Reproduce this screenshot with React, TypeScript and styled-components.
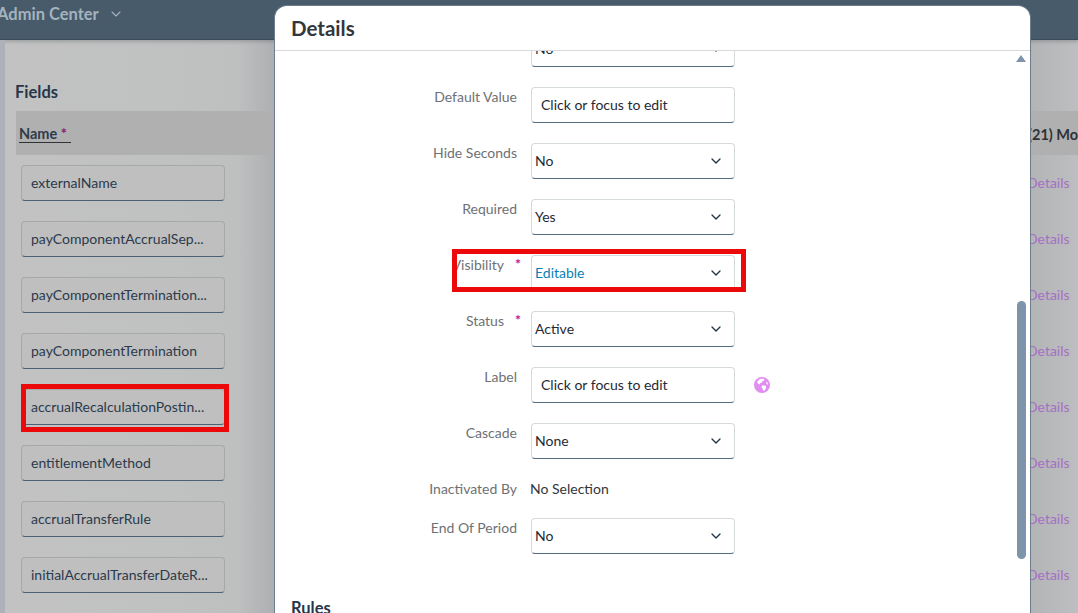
import { createGlobalStyle, styled } from 'styled-components';
import { ChevronDown } from 'lucide-react';

const GlobalStyle = createGlobalStyle`
  html, body {
    margin: 0;
    padding: 0;
    background: #c1c1c1;
  }
  body {
    font-family: Lato, "Noto Sans", sans-serif;
    overflow: hidden;
  }
`;

const Page = styled.div`
  position: relative;
  width: 1078px;
  height: 613px;
  overflow: hidden;
  background: linear-gradient(90deg, #c2c2c2 0%, #c0c1c1 15%, #bebfbf 22%, #aeafb1 25.5%, #b2b3b5 95%, #bdbebf 100%);
`;

const TopBar = styled.header`
  height: 40px;
  box-sizing: border-box;
  display: flex;
  align-items: center;
  gap: 9px;
  padding: 0 0 11px 0;
  margin-left: -3px;
  background: #475b6b;
  border-bottom: 1px solid #3b4d5b;
  box-shadow: 0 2px 3px rgba(60, 70, 80, 0.25);
  color: #a4b3bd;
  font-size: 16.5px;
  font-weight: 700;
`;

const Body = styled.div`
  display: flex;
`;

const Rail = styled.div`
  width: 5px;
  height: 573px;
  background: #aeb1b7;
  flex: none;
`;

const Content = styled.main`
  flex: 1;
  padding: 41px 0 0 10px;
  overflow: hidden;
`;

const SectionTitle = styled.h2`
  margin: 0 0 10px;
  height: 20px;
  line-height: 22px;
  font-size: 16.5px;
  font-weight: 700;
  color: #273649;
`;

const TableHead = styled.div`
  display: grid;
  grid-template-columns: 1012px auto;
  align-items: center;
  height: 44px;
  box-sizing: border-box;
  padding-top: 2px;
  background: #b0b0b0;
  margin-left: 1px;
  white-space: nowrap;
  font-size: 14.5px;
  font-weight: 700;
  color: #2f3337;
`;

const NameHead = styled.span`
  margin-left: 3px;
  width: 52px;
  border-bottom: 1px solid #2f3337;
  line-height: 16px;
  color: #2f3b4a;
`;

const Star = styled.span`
  color: #8c1a6a;
`;

const FieldRow = styled.div`
  display: grid;
  grid-template-columns: 1012px auto;
  align-items: center;
  height: 56px;
`;

const FieldCell = styled.div`
  position: relative;
  width: 204px;
  height: 36px;
  margin-left: 6px;
  box-sizing: border-box;
  padding: 0 9px;
  display: flex;
  align-items: center;
  background: #bfbfbf;
  border: 1px solid #a6a8ab;
  border-bottom-color: #4e6173;
  border-radius: 4px;
  font-size: 14px;
  color: #2b3a4b;
  white-space: nowrap;
`;

const Value = styled.span`
  margin-bottom: 2px;
`;

const DetailsLink = styled.span`
  font-size: 14px;
  color: #a56fc6;
  margin-bottom: 2px;
`;

const Marker = styled.span`
  position: absolute;
  box-sizing: border-box;
  border: 5px solid #ec0909;
  pointer-events: none;
`;

const CellMarker = styled(Marker)`
  inset: -6px -5px -8px -1px;
`;

const RowMarker = styled(Marker)`
  left: 177px;
  top: 4px;
  width: 294px;
  height: 43px;
`;

const Modal = styled.section`
  position: absolute;
  left: 275px;
  top: 6px;
  width: 755px;
  height: 640px;
  box-sizing: border-box;
  display: flex;
  flex-direction: column;
  background: #fff;
  border-radius: 12px 12px 0 0;
  box-shadow: 0 0 0 1px #6c7c8c;
`;

const ModalHeader = styled.div`
  flex: none;
  height: 45px;
  box-sizing: border-box;
  display: flex;
  align-items: center;
  padding: 0 0 0 16px;
  border-bottom: 1px solid #d9d9d9;
  font-size: 20.5px;
  font-weight: 700;
  color: #33373b;
`;

const ScrollArea = styled.div`
  position: relative;
  flex: 1;
  overflow: hidden;
`;

const Form = styled.div`
  margin-top: -30px;
  display: flex;
  flex-direction: column;
`;

const Row = styled.div<{ $height?: number }>`
  position: relative;
  display: flex;
  gap: 14px;
  height: ${(p) => p.$height ?? 56}px;
`;

const Label = styled.label`
  width: 242px;
  flex: none;
  text-align: right;
  padding-top: 11px;
  line-height: 18px;
  font-size: 14px;
  color: #6e7174;
  white-space: nowrap;
`;

const RequiredLabel = styled(Label)`
  position: relative;
  padding-right: 13px;
  width: 229px;

  &::after {
    content: '*';
    position: absolute;
    right: -4px;
    top: 10px;
    color: #c2127a;
    font-weight: 700;
  }
`;

const Control = styled.div<{ $active?: boolean; $text?: boolean }>`
  width: 204px;
  height: 36px;
  margin-top: 10px;
  box-sizing: border-box;
  padding: 0 10px 0 ${(p) => (p.$text ? 9 : 3)}px;
  display: flex;
  align-items: center;
  justify-content: space-between;
  background: #fff;
  border: 1px solid #d5dadd;
  border-bottom-color: #556b82;
  border-radius: 4px;
  font-size: 14px;
  color: ${(p) => (p.$active ? '#0a7fb5' : '#1f2a36')};
`;

const ReadOnly = styled.span`
  padding: 11px 0 0 0;
  margin-left: -1px;
  line-height: 18px;
  font-size: 14px;
  color: #32363a;
`;

const GlobeIcon = styled.svg`
  align-self: flex-start;
  margin: 20px 0 0 5px;
`;

const RulesTitle = styled.h3`
  margin: 34px 0 0 16px;
  font-size: 16.5px;
  line-height: 20px;
  font-weight: 700;
  color: #273649;
`;

const ScrollUp = styled.span`
  position: absolute;
  right: 4px;
  top: 4px;
  width: 0;
  height: 0;
  border-left: 5px solid transparent;
  border-right: 5px solid transparent;
  border-bottom: 7px solid #7d94ab;
`;

const ScrollThumb = styled.span`
  position: absolute;
  right: 4px;
  top: 250px;
  width: 9px;
  height: 258px;
  border-radius: 5px;
  background: #7d94ab;
`;

const fields = [
  'externalName',
  'payComponentAccrualSep...',
  'payComponentTermination...',
  'payComponentTermination',
  'accrualRecalculationPostin...',
  'entitlementMethod',
  'accrualTransferRule',
  'initialAccrualTransferDateR...',
];

const Select = ({ value, active }: { value: string; active?: boolean }) => (
  <Control $active={active}>
    <Value>{value}</Value>
    <ChevronDown size={16} color="#223548" strokeWidth={2} />
  </Control>
);

const TextInput = () => (
  <Control $text>
    <Value>Click or focus to edit</Value>
  </Control>
);

export default function App() {
  return (
    <Page>
      <GlobalStyle />
      <TopBar>
        Admin Center
        <ChevronDown size={16} color="#a4b3bd" strokeWidth={1.6} />
      </TopBar>
      <Body>
        <Rail />
        <Content>
          <SectionTitle>Fields</SectionTitle>
          <TableHead>
            <NameHead>
              Name <Star>*</Star>
            </NameHead>
            <span>(21) Monthly</span>
          </TableHead>
          {fields.map((name) => (
            <FieldRow key={name}>
              <FieldCell>
                <Value>{name}</Value>
                {name.startsWith('accrualRecalc') && <CellMarker />}
              </FieldCell>
              <DetailsLink>Details</DetailsLink>
            </FieldRow>
          ))}
        </Content>
      </Body>
      <Modal>
        <ModalHeader>Details</ModalHeader>
        <ScrollArea>
          <Form>
            <Row>
              <Label />
              <Select value="No" />
            </Row>
            <Row>
              <Label>Default Value</Label>
              <TextInput />
            </Row>
            <Row>
              <Label>Hide Seconds</Label>
              <Select value="No" />
            </Row>
            <Row>
              <Label>Required</Label>
              <Select value="Yes" />
            </Row>
            <Row>
              <RequiredLabel>Visibility</RequiredLabel>
              <Select value="Editable" active />
              <RowMarker />
            </Row>
            <Row>
              <RequiredLabel>Status</RequiredLabel>
              <Select value="Active" />
            </Row>
            <Row>
              <Label>Label</Label>
              <TextInput />
              <GlobeIcon width="16" height="16" viewBox="0 0 16 16">
                <circle cx="8" cy="8" r="8" fill="#e08ff0" />
                <path
                  d="M5 2.6c1.6-.9 3.6-1 5.3-.3l-.4 1.5-1.6.4-.3 1.4-1.7.4-.6 1.5-1.5-.8L3 5.2zM8 8.4l3.2.2 1 1.5-1 3-1.8 1-.7-2.4L7.4 10zM12.4 4.4l1.3 1.4.2 2-1.4-.9z"
                  fill="#fff"
                />
              </GlobeIcon>
            </Row>
            <Row>
              <Label>Cascade</Label>
              <Select value="None" />
            </Row>
            <Row $height={39}>
              <Label>Inactivated By</Label>
              <ReadOnly>No Selection</ReadOnly>
            </Row>
            <Row $height={56}>
              <Label>End Of Period</Label>
              <Select value="No" />
            </Row>
          </Form>
          <RulesTitle>Rules</RulesTitle>
          <ScrollUp />
          <ScrollThumb />
        </ScrollArea>
      </Modal>
    </Page>
  );
}
